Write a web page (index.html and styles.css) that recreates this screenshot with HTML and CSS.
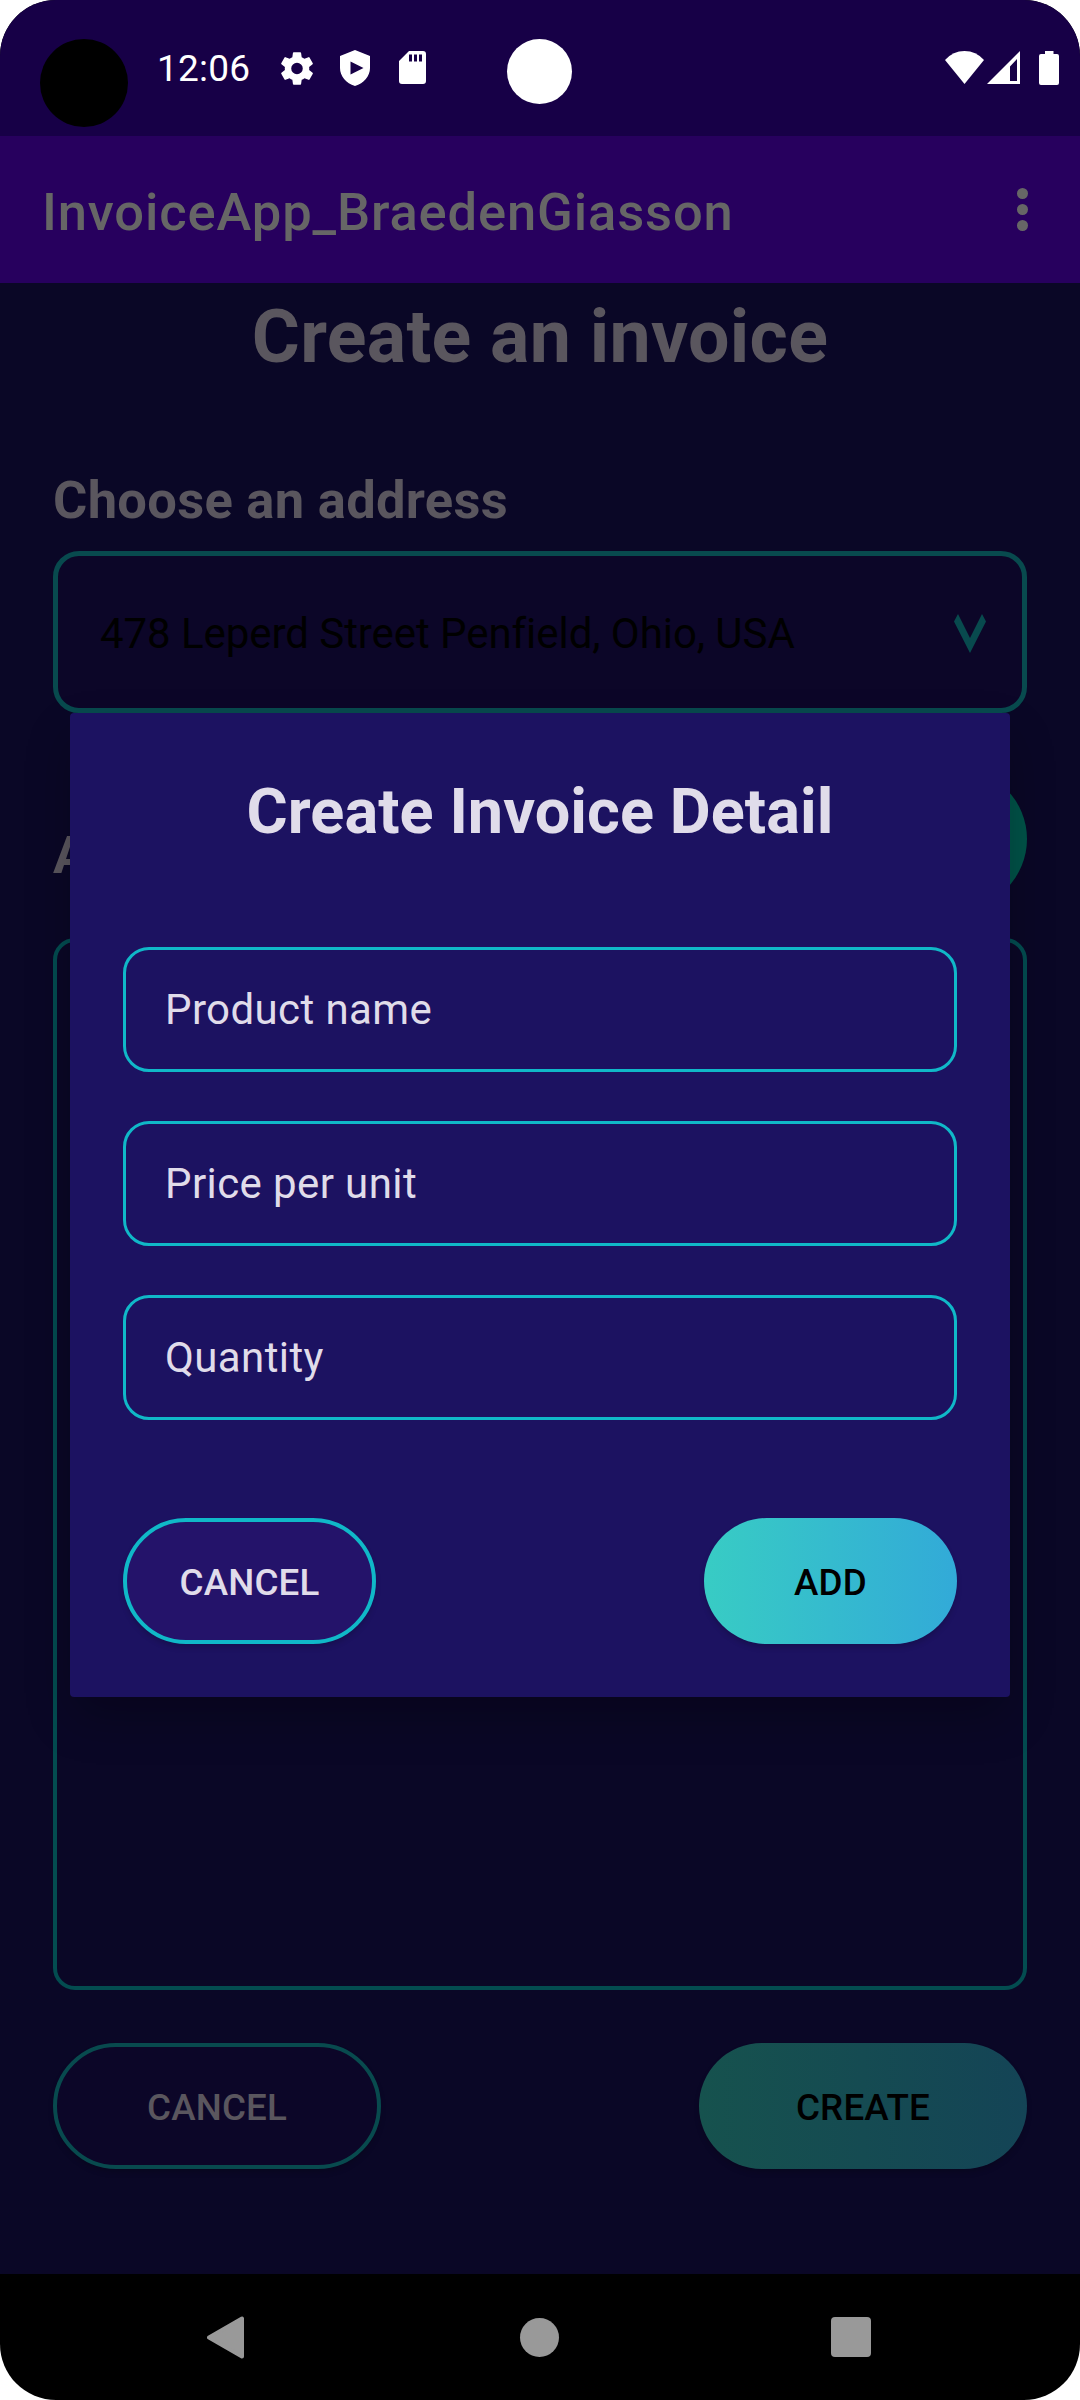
FILE: index.html
```html
<!DOCTYPE html>
<html lang="en">
<head>
<meta charset="utf-8">
<title>InvoiceApp</title>
<link rel="stylesheet" href="styles.css">
</head>
<body>
<div class="screen">
  <header class="status">
    <span class="camera"></span>
    <span class="clock">12:06</span>
    <svg class="gear" viewBox="2 2 20 20"><path fill="#fff" fill-rule="evenodd" d="M19.14 12.94c.04-.3.06-.61.06-.94 0-.32-.02-.64-.07-.94l2.03-1.58a.49.49 0 0 0 .12-.61l-1.92-3.32a.49.49 0 0 0-.59-.22l-2.39.96a7 7 0 0 0-1.62-.94l-.36-2.54A.48.48 0 0 0 13.92 2.4h-3.84a.48.48 0 0 0-.47.41l-.36 2.54a7.3 7.3 0 0 0-1.62.94l-2.39-.96a.48.48 0 0 0-.59.22L2.74 8.87a.48.48 0 0 0 .12.61l2.03 1.58a6 6 0 0 0 0 1.88l-2.03 1.58a.49.49 0 0 0-.12.61l1.92 3.32c.12.22.37.29.59.22l2.39-.96c.5.38 1.03.7 1.62.94l.36 2.54c.05.24.24.41.48.41h3.84c.24 0 .44-.17.47-.41l.36-2.54a7 7 0 0 0 1.62-.94l2.39.96c.22.08.47 0 .59-.22l1.92-3.32a.48.48 0 0 0-.12-.61zM12 15.4a3.4 3.4 0 1 1 0-6.8 3.4 3.4 0 0 1 0 6.8z"/></svg>
    <svg class="shield" viewBox="0 0 30 36"><path fill="#fff" fill-rule="evenodd" d="M15 0 30 6v12c0 8-6 15.500-15 18C6 33.500 0 26 0 18V6zM10.500 11.500v13L23.500 18z"/></svg>
    <svg class="sdcard" viewBox="0 0 27 33"><path fill="#fff" fill-rule="evenodd" d="M10 0h14a3 3 0 0 1 3 3v27a3 3 0 0 1-3 3H3a3 3 0 0 1-3-3V10zM10 3.500v7h3v-7zm5 0v7h3v-7zm5 0v7h3v-7z"/></svg>
    <span class="lens"></span>
    <svg class="wifi" viewBox="0 0 39 33"><path fill="#fff" d="M0 9Q8 0 19.500 0T39 9L19.500 33z"/></svg>
    <svg class="signal" viewBox="0 0 33 33"><path fill="#fff" fill-rule="evenodd" d="M33 0v33H0zM30 8l-7 7.500V30h7z"/></svg>
    <svg class="battery" viewBox="0 0 20 34"><path fill="#fff" d="M6 0h8.500v3H18a2 2 0 0 1 2 2v27a2 2 0 0 1-2 2H2a2 2 0 0 1-2-2V5a2 2 0 0 1 2-2h4z"/></svg>
  </header>
  <div class="appbar">
    <span class="apptitle">InvoiceApp_BraedenGiasson</span>
    <span class="more"><i></i><i></i><i></i></span>
  </div>
  <main class="page">
    <h1 class="heading">Create an invoice</h1>
    <h2 class="label">Choose an address</h2>
    <div class="select">
      <span>478 Leperd Street Penfield, Ohio, USA</span>
      <svg class="caret" viewBox="0 0 32 39"><path fill="#084a4e" d="M4 0 16 24 28 0l4 7.500L16 39 0 7.500z"/></svg>
    </div>
    <div class="items-head">
      <h2 class="items-label">A</h2>
      <span class="plus"></span>
    </div>
    <div class="items"></div>
    <div class="actions">
      <span class="btn outline dim">CANCEL</span>
      <span class="btn filled dim">CREATE</span>
    </div>
  </main>
  <nav class="nav">
    <svg class="back" viewBox="0 0 37 43"><path fill="#999" stroke="#999" stroke-width="4" stroke-linejoin="round" d="M35 2.500v38L2 21.500z"/></svg>
    <span class="home"></span>
    <span class="recent"></span>
  </nav>
  <section class="dialog">
    <h2 class="dialog-title">Create Invoice Detail</h2>
    <div class="fields">
      <div class="field">Product name</div>
      <div class="field">Price per unit</div>
      <div class="field">Quantity</div>
    </div>
    <div class="dialog-actions">
      <span class="btn outline">CANCEL</span>
      <span class="btn filled">ADD</span>
    </div>
  </section>
</div>
</body>
</html>
```

FILE: styles.css
```css
* { box-sizing: border-box; }
html, body { margin: 0; background: #fff; }
body { font-family: Roboto, sans-serif; }
h1, h2 { margin: 0; font-weight: 700; }
svg { display: block; flex: none; }

.screen {
  position: relative;
  display: flex;
  flex-direction: column;
  width: 1080px;
  height: 2400px;
  overflow: hidden;
  border-radius: 56px;
  background: #000;
}

/* status bar */
.status {
  display: flex;
  align-items: flex-start;
  height: 136px;
  padding: 39px 21px 0 40px;
  background: #170047;
}
.camera { width: 88px; height: 88px; border-radius: 50%; background: #000; }
.clock {
  width: 124px;
  margin: 8px 0 0 29px;
  font-size: 37px;
  line-height: 44px;
  letter-spacing: .2px;
  color: #fff;
}
.gear { width: 34px; height: 35px; margin-top: 12px; margin-left: -1px; }
.shield { width: 30px; height: 36px; margin: 11px 0 0 26px; }
.sdcard { width: 27px; height: 33px; margin: 12px 0 0 29px; }
.lens { width: 65px; height: 65px; margin-left: 81px; border-radius: 50%; background: #fff; }
.wifi { width: 39px; height: 33px; margin: 12px 0 0 auto; }
.signal { width: 33px; height: 33px; margin: 12px 0 0 3px; }
.battery { width: 20px; height: 34px; margin: 12px 0 0 19px; }

/* app bar */
.appbar {
  display: flex;
  align-items: center;
  justify-content: space-between;
  height: 147px;
  padding: 0 52px 0 42px;
  background: #27005e;
}
.apptitle {
  padding-top: 4px;
  font-size: 52.5px;
  font-weight: 500;
  line-height: 62px;
  letter-spacing: .87px;
  color: #666;
}
.more { display: flex; flex-direction: column; gap: 5px; }
.more i { width: 11px; height: 11px; border-radius: 50%; background: #666; }

/* dimmed page */
.page {
  display: flex;
  flex-direction: column;
  height: 1991px;
  padding: 11px 53px 0;
  background: #0a0726;
  color: #5a565e;
}
.heading { font-size: 73.5px; line-height: 86px; letter-spacing: .3px; text-align: center; }
.label { margin-top: 89px; font-size: 52.5px; line-height: 62px; letter-spacing: .28px; }
.select {
  display: flex;
  align-items: center;
  justify-content: space-between;
  height: 162px;
  margin-top: 20px;
  padding: 2px 36px 0 42px;
  border: 5px solid #084a4e;
  border-radius: 26px;
  background: #0c0628;
  color: #000;
  font-size: 42px;
  letter-spacing: -.06px;
}
.caret { width: 32px; height: 39px; margin-top: 1px; }
.items-head {
  display: flex;
  align-items: center;
  justify-content: space-between;
  height: 225px;
  padding-top: 27px;
}
.items-label { padding-top: 32px; font-size: 52.5px; line-height: 62px; }
.plus { width: 140px; height: 140px; border-radius: 50%; background: #005248; }
.items {
  height: 1052px;
  border: 4px solid #034c50;
  border-radius: 22px;
}
.actions { display: flex; justify-content: space-between; margin-top: 53px; }
.actions .btn { width: 328px; }

.btn {
  display: flex;
  align-items: center;
  justify-content: center;
  width: 253px;
  height: 126px;
  border-radius: 63px;
  padding-top: 2px;
  font-size: 36.75px;
  font-weight: 500;
  letter-spacing: .15px;
  box-shadow: 0 4px 6px -1px rgba(0, 0, 0, .2);
}
.outline { border: 4px solid #10b8c8; background: #24136a; color: #e0dcea; }
.filled { background: linear-gradient(90deg, #38ccc4, #32aad8); color: #000; }
.outline.dim { border-color: #084a4e; background: #0c0628; color: #5a565e; }
.filled.dim { background: linear-gradient(90deg, #16524e, #144456); color: #000; }

/* navigation bar */
.nav { display: flex; align-items: center; height: 126px; padding-left: 207px; }
.back { width: 37px; height: 43px; }
.home { width: 39px; height: 39px; margin-left: 276px; border-radius: 50%; background: #999; }
.recent { width: 40px; height: 40px; margin-left: 272px; border-radius: 4px; background: #999; }

/* dialog floating over the page */
.dialog {
  position: absolute;
  left: 70px;
  top: 713px;
  width: 940px;
  height: 984px;
  padding: 62px 53px 0;
  border-radius: 4px;
  background: #1c1261;
  color: #e0dcea;
  box-shadow: 0 22px 44px -4px rgba(0, 0, 0, .26);
}
.dialog-title { font-size: 63px; line-height: 74px; letter-spacing: .06px; text-align: center; }
.fields { display: grid; gap: 49px; margin-top: 98px; }
.field {
  display: flex;
  align-items: center;
  height: 125px;
  padding-left: 39px;
  border: 3px solid #10b8c8;
  border-radius: 26px;
  font-size: 42px;
  letter-spacing: .4px;
}
.dialog-actions { display: flex; justify-content: space-between; margin-top: 98px; }
```
